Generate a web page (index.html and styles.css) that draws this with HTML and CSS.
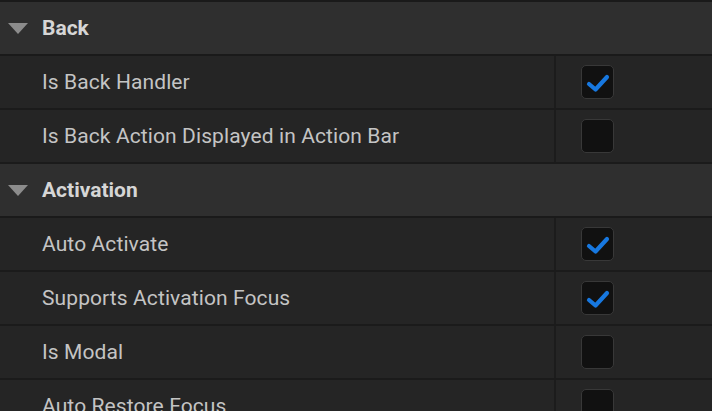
FILE: index.html
```html
<!DOCTYPE html>
<html>
<head>
<meta charset="utf-8">
<link rel="stylesheet" href="styles.css">
</head>
<body>
<div class="panel">
  <div class="cat">
    <svg class="arrow" width="20" height="11" viewBox="0 0 20 11"><path d="M0 0H20L10 11Z" fill="#8c8c8c"/></svg>
    <span class="cat-name">Back</span>
  </div>
  <div class="prop">
    <div class="name">Is Back Handler</div>
    <div class="value"><span class="check on"><svg width="26" height="20" viewBox="0 0 26 20"><path d="M4 11L10.5 16.5L22 4" fill="none" stroke="#1778e0" stroke-width="4.2" stroke-linecap="round" stroke-linejoin="round"/></svg></span></div>
  </div>
  <div class="prop">
    <div class="name">Is Back Action Displayed in Action Bar</div>
    <div class="value"><span class="check"></span></div>
  </div>
  <div class="cat">
    <svg class="arrow" width="20" height="11" viewBox="0 0 20 11"><path d="M0 0H20L10 11Z" fill="#8c8c8c"/></svg>
    <span class="cat-name">Activation</span>
  </div>
  <div class="prop">
    <div class="name">Auto Activate</div>
    <div class="value"><span class="check on"><svg width="26" height="20" viewBox="0 0 26 20"><path d="M4 11L10.5 16.5L22 4" fill="none" stroke="#1778e0" stroke-width="4.2" stroke-linecap="round" stroke-linejoin="round"/></svg></span></div>
  </div>
  <div class="prop">
    <div class="name">Supports Activation Focus</div>
    <div class="value"><span class="check on"><svg width="26" height="20" viewBox="0 0 26 20"><path d="M4 11L10.5 16.5L22 4" fill="none" stroke="#1778e0" stroke-width="4.2" stroke-linecap="round" stroke-linejoin="round"/></svg></span></div>
  </div>
  <div class="prop">
    <div class="name">Is Modal</div>
    <div class="value"><span class="check"></span></div>
  </div>
  <div class="prop">
    <div class="name">Auto Restore Focus</div>
    <div class="value"><span class="check"></span></div>
  </div>
</div>
</body>
</html>
```
FILE: styles.css
```css
html, body {
  margin: 0;
  padding: 0;
  background: #1b1b1b;
  height: 100%;
  overflow: hidden;
}
.panel {
  border-top: 2px solid #1a1a1a;
  font-family: Roboto, "Liberation Sans", sans-serif;
}
.cat {
  height: 52px;
  background: #2f2f2f;
  border-bottom: 2px solid #1a1a1a;
  display: flex;
  align-items: center;
  padding-left: 8px;
  gap: 14px;
}
.arrow {
  display: block;
  margin-top: 1px;
}
.cat-name {
  color: #d6d6d6;
  font-weight: bold;
  font-size: 21px;
}
.prop {
  height: 52px;
  background: #252525;
  border-bottom: 2px solid #1b1b1b;
  display: grid;
  grid-template-columns: 556px 1fr;
}
.name {
  display: flex;
  align-items: center;
  padding-left: 42px;
  color: #c4c4c4;
  font-size: 21px;
  letter-spacing: 0.1px;
  border-right: 2px solid #1c1c1c;
}
.value {
  display: flex;
  align-items: center;
  padding-left: 25px;
}
.check {
  width: 33px;
  height: 34px;
  box-sizing: border-box;
  background: #111111;
  border: 1.5px solid #383838;
  border-radius: 5px;
  display: flex;
  align-items: center;
  justify-content: center;
}
.check svg {
  display: block;
  margin-top: 1px;
}
```
